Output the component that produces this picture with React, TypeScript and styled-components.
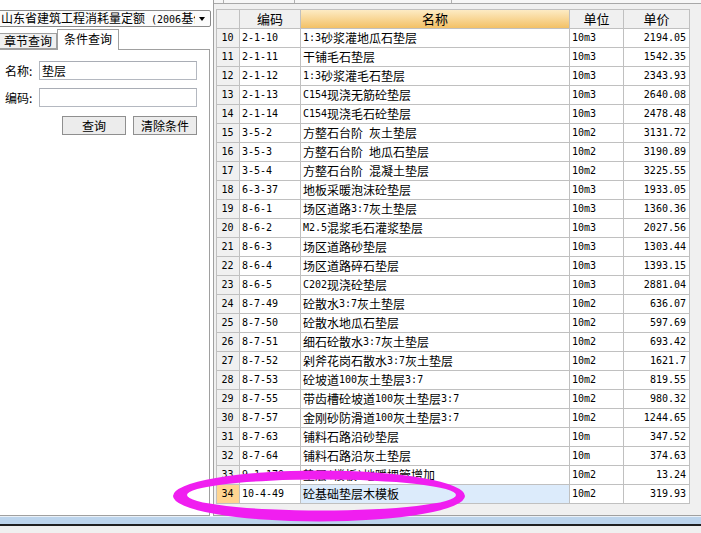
import React from "react";
import styled, { createGlobalStyle } from "styled-components";

const GlobalStyle = createGlobalStyle`
  html, body { margin: 0; padding: 0; background: #fff; overflow: hidden; }
  body {
    font-family: "Noto Sans CJK SC", "Liberation Sans", sans-serif;
    font-size: 12px;
    color: #000;
  }
  * { box-sizing: border-box; }
`;

const Root = styled.div`
  position: relative;
  width: 701px;
  height: 533px;
  display: flex;
  flex-direction: column;
  overflow: hidden;
  background: #fff;
`;

const Main = styled.div`
  display: flex;
  height: 516px;
`;

const LeftPane = styled.div`
  width: 213px;
  display: flex;
  flex-direction: column;
  padding-top: 10px;
`;

const Combo = styled.div`
  margin-left: -2px;
  width: 213px;
  height: 17px;
  border: 1px solid #8a8a8a;
  border-radius: 2px;
  background: #fbfbfb;
  display: flex;
  align-items: center;
  padding-left: 2px;
`;

const ComboText = styled.div`
  flex: 1;
  overflow: hidden;
  white-space: nowrap;
  line-height: 15px;
  font-size: 12px;
`;

const ComboArrow = styled.div`
  width: 0;
  height: 0;
  margin: 0 5px 0 4px;
  border-left: 3.5px solid transparent;
  border-right: 3.5px solid transparent;
  border-top: 4px solid #000;
`;

const TabRow = styled.div`
  height: 22px;
  display: flex;
  align-items: flex-end;
  margin-left: -1px;
  position: relative;
  z-index: 1;
`;

const Tab = styled.div<{ $active?: boolean }>`
  height: ${(p) => (p.$active ? 21 : 16)}px;
  width: ${(p) => (p.$active ? 62 : 58)}px;
  margin-bottom: ${(p) => (p.$active ? -1 : 0)}px;
  border: 1px solid #a0a0a0;
  border-bottom: ${(p) => (p.$active ? "none" : "1px solid #a0a0a0")};
  background: ${(p) => (p.$active ? "#fff" : "#f0f0f0")};
  display: flex;
  align-items: center;
  justify-content: center;
  font-size: 12px;
  line-height: 14px;
  padding-bottom: ${(p) => (p.$active ? 2 : 0)}px;
`;

const Panel = styled.div`
  flex: 1;
  margin-left: -1px;
  width: 211px;
  border: 1px solid #a0a0a0;
  background: #fff;
  display: flex;
  flex-direction: column;
  padding-top: 11px;
`;

const FormRow = styled.div<{ $gap?: number }>`
  display: flex;
  align-items: center;
  height: 19px;
  margin-top: ${(p) => p.$gap ?? 0}px;
`;

const Label = styled.div`
  width: 39px;
  padding-left: 5px;
  font-size: 12px;
  white-space: nowrap;
`;

const Input = styled.input`
  width: 158px;
  height: 19px;
  border: 1px solid #b4b8c0;
  border-top-color: #a9adb5;
  padding: 0 2px;
  font-family: "Noto Sans CJK SC", sans-serif;
  font-size: 12px;
  outline: none;
  background: #fff;
  color: #000;
`;

const ButtonRow = styled.div`
  display: flex;
  justify-content: flex-end;
  gap: 7px;
  padding-right: 12px;
  margin-top: 9px;
`;

const Button = styled.div`
  width: 64px;
  height: 19px;
  border: 1px solid #8f8f8f;
  background: #ececec;
  display: flex;
  align-items: center;
  justify-content: center;
  font-size: 12px;
`;

const GridPane = styled.div`
  flex: 1;
  border-left: 1px solid #a0a0a0;
  border-bottom: 1px solid #a0a0a0;
  background: #f0f0f0;
  display: flex;
  flex-direction: column;
`;

const TopStrip = styled.div`
  height: 4px;
  border-bottom: 1px solid #a8a8a8;
  background: #f7f7f7;
  display: flex;
`;

const StripTick = styled.div<{ $w: number }>`
  width: ${(p) => p.$w}px;
  border-right: 1px solid #b0b0b0;
`;

const Table = styled.div`
  margin: 5px 0 0 2px;
  display: grid;
  grid-template-columns: 23px 61px 269px 54px 66px;
  grid-auto-rows: 19px;
  width: 474px;
  border-left: 1px solid #c0c0c0;
  border-top: 1px solid #c0c0c0;
  background: #fff;
`;

const HeadCell = styled.div<{ $sorted?: boolean }>`
  border-right: 1px solid #c0c0c0;
  border-bottom: 1px solid #c0c0c0;
  background: ${(p) =>
    p.$sorted ? "linear-gradient(#fdebc4, #f3c166)" : "#f0f0f0"};
  display: flex;
  align-items: center;
  justify-content: center;
  font-size: 13px;
  line-height: 16px;
`;

const Cell = styled.div<{ $align?: "left" | "right" | "center"; $bg?: string }>`
  border-right: 1px solid #c0c0c0;
  border-bottom: 1px solid #c0c0c0;
  background: ${(p) => p.$bg ?? "#fff"};
  display: flex;
  align-items: center;
  justify-content: ${(p) =>
    p.$align === "right" ? "flex-end" : p.$align === "center" ? "center" : "flex-start"};
  padding: 0 ${(p) => (p.$align === "right" ? 3 : 1)}px 0 ${(p) => (p.$align === "center" ? 0 : 2)}px;
  white-space: nowrap;
  overflow: hidden;
  font-size: 12px;
  line-height: 16px;
`;

const Latin = styled.span`
  font-family: "DejaVu Sans Mono", "Liberation Mono", monospace;
  font-size: 10px;
  white-space: pre;
`;

const StatusBar = styled.div`
  height: 17px;
  display: flex;
  flex-direction: column;
`;

const StatusBand = styled.div<{ $h: number; $c: string }>`
  height: ${(p) => p.$h}px;
  background: ${(p) => p.$c};
`;

const Marker = styled.svg`
  position: absolute;
  left: 0;
  top: 0;
  pointer-events: none;
`;

function Mixed({ text }: { text: string }) {
  const parts = text.split(/([\x20-\x7e]+)/).filter((s) => s.length > 0);
  return (
    <>
      {parts.map((s, i) =>
        /^[\x20-\x7e]+$/.test(s) ? <Latin key={i}>{s}</Latin> : <span key={i}>{s}</span>
      )}
    </>
  );
}

type Row = [number, string, string, string, string];

const rows: Row[] = [
  [10, "2-1-10", "1:3砂浆灌地瓜石垫层", "10m3", "2194.05"],
  [11, "2-1-11", "干铺毛石垫层", "10m3", "1542.35"],
  [12, "2-1-12", "1:3砂浆灌毛石垫层", "10m3", "2343.93"],
  [13, "2-1-13", "C154现浇无筋砼垫层", "10m3", "2640.08"],
  [14, "2-1-14", "C154现浇毛石砼垫层", "10m3", "2478.48"],
  [15, "3-5-2", "方整石台阶 灰土垫层", "10m2", "3131.72"],
  [16, "3-5-3", "方整石台阶 地瓜石垫层", "10m2", "3190.89"],
  [17, "3-5-4", "方整石台阶 混凝土垫层", "10m2", "3225.55"],
  [18, "6-3-37", "地板采暖泡沫砼垫层", "10m3", "1933.05"],
  [19, "8-6-1", "场区道路3:7灰土垫层", "10m3", "1360.36"],
  [20, "8-6-2", "M2.5混浆毛石灌浆垫层", "10m3", "2027.56"],
  [21, "8-6-3", "场区道路砂垫层", "10m3", "1303.44"],
  [22, "8-6-4", "场区道路碎石垫层", "10m3", "1393.15"],
  [23, "8-6-5", "C202现浇砼垫层", "10m3", "2881.04"],
  [24, "8-7-49", "砼散水3:7灰土垫层", "10m2", "636.07"],
  [25, "8-7-50", "砼散水地瓜石垫层", "10m2", "597.69"],
  [26, "8-7-51", "细石砼散水3:7灰土垫层", "10m2", "693.42"],
  [27, "8-7-52", "剁斧花岗石散水3:7灰土垫层", "10m2", "1621.7"],
  [28, "8-7-53", "砼坡道100灰土垫层3:7", "10m2", "819.55"],
  [29, "8-7-55", "带齿槽砼坡道100灰土垫层3:7", "10m2", "980.32"],
  [30, "8-7-57", "金刚砂防滑道100灰土垫层3:7", "10m2", "1244.65"],
  [31, "8-7-63", "铺料石路沿砂垫层", "10m", "347.52"],
  [32, "8-7-64", "铺料石路沿灰土垫层", "10m", "374.63"],
  [33, "9-1-170", "垫层(楼板)地暖埋管增加", "10m2", "13.24"],
  [34, "10-4-49", "砼基础垫层木模板", "10m2", "319.93"],
];

const SELECTED = 34;

export default function App() {
  return (
    <Root>
      <GlobalStyle />
      <Main>
        <LeftPane>
          <Combo>
            <ComboText>
              <Mixed text="山东省建筑工程消耗量定额 (2006基价表)" />
            </ComboText>
            <ComboArrow />
          </Combo>
          <TabRow>
            <Tab>章节查询</Tab>
            <Tab $active>条件查询</Tab>
          </TabRow>
          <Panel>
            <FormRow>
              <Label>名称:</Label>
              <Input value="垫层" readOnly />
            </FormRow>
            <FormRow $gap={8}>
              <Label>编码:</Label>
              <Input value="" readOnly />
            </FormRow>
            <ButtonRow>
              <Button>查询</Button>
              <Button>清除条件</Button>
            </ButtonRow>
          </Panel>
        </LeftPane>
        <GridPane>
          <TopStrip>
            <StripTick $w={10} />
            <StripTick $w={71} />
            <StripTick $w={157} />
          </TopStrip>
          <Table>
            <HeadCell />
            <HeadCell>编码</HeadCell>
            <HeadCell $sorted>名称</HeadCell>
            <HeadCell>单位</HeadCell>
            <HeadCell>单价</HeadCell>
            {rows.map(([n, code, name, unit, price]) => {
              const sel = n === SELECTED;
              return (
                <React.Fragment key={n}>
                  <Cell $align="center" $bg={sel ? "#ffd591" : "#f0f0f0"}>
                    <Latin>{n}</Latin>
                  </Cell>
                  <Cell>
                    <Latin>{code}</Latin>
                  </Cell>
                  <Cell $bg={sel ? "#dcebfb" : undefined}>
                    <Mixed text={name} />
                  </Cell>
                  <Cell>
                    <Latin>{unit}</Latin>
                  </Cell>
                  <Cell $align="right">
                    <Latin>{price}</Latin>
                  </Cell>
                </React.Fragment>
              );
            })}
          </Table>
        </GridPane>
      </Main>
      <StatusBar>
        <StatusBand $h={1} $c="#eaf1f8" />
        <StatusBand $h={7} $c="#bcd4ec" />
        <StatusBand $h={2} $c="#202020" />
        <StatusBand $h={7} $c="#f0f0f0" />
      </StatusBar>
      <Marker width={701} height={533} viewBox="0 0 701 533">
        <path
          fillRule="evenodd"
          fill="#f01ef0"
          d="M173 496 a146 25.5 0 1 0 292 0 a146 25.5 0 1 0 -292 0 Z M187 495 a134.5 15.5 0 1 0 269 0 a134.5 15.5 0 1 0 -269 0 Z"
        />
      </Marker>
    </Root>
  );
}
